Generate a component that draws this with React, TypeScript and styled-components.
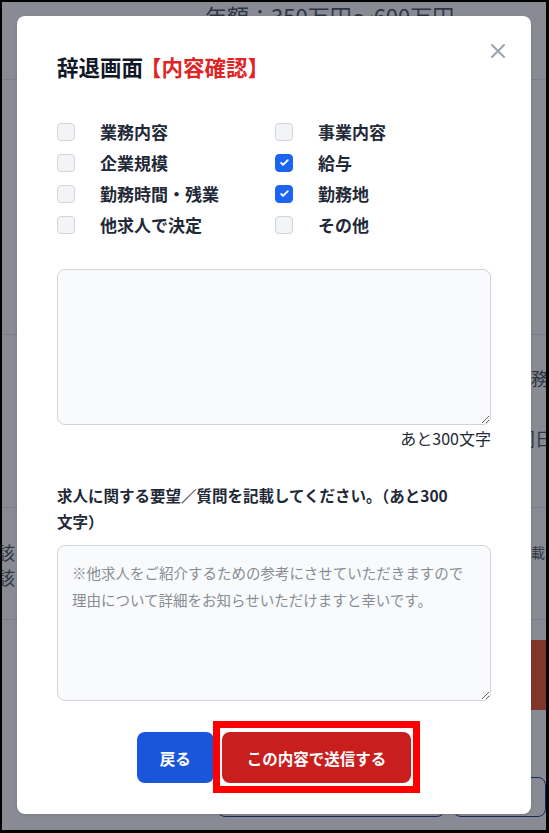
import React from 'react';
import styled, { createGlobalStyle } from 'styled-components';

const GlobalStyle = createGlobalStyle`
  html, body {
    margin: 0;
    padding: 0;
  }
  body {
    font-family: "Noto Sans CJK JP", "Noto Sans", sans-serif;
  }
  * {
    box-sizing: border-box;
  }
`;

const Frame = styled.div`
  position: relative;
  width: 549px;
  height: 833px;
  border-style: solid;
  border-color: #000;
  border-width: 2px 3px 3px 2px;
  overflow: hidden;
  background: #fff;
`;

/* page behind the dialog */
const Page = styled.div`
  display: flex;
  flex-direction: column;
  color: #4b5563;
  font-size: 18px;
  white-space: nowrap;
`;

const Band = styled.div<{ $h: number; $line?: boolean }>`
  height: ${(p) => p.$h}px;
  border-bottom: ${(p) => (p.$line ? '1px solid #e5e7eb' : 'none')};
  overflow: hidden;
`;

const Salary = styled.div`
  margin-top: -2px;
  padding-left: 203px;
  font-size: 22px;
  line-height: 30px;
`;

const RightLines = styled.div`
  display: flex;
  flex-direction: column;
  gap: 34px;
  padding: 30px 0 0 511px;
  line-height: 26px;
`;

const Shifted = styled.div<{ $dx: number }>`
  margin-left: ${(p) => p.$dx}px;
`;

const SplitRow = styled.div`
  display: grid;
  grid-template-columns: 513px 1fr;
  padding-top: 32px;
  line-height: 25px;
`;

const LeftText = styled.div`
  margin-left: -5px;
`;

const SmallRight = styled.div`
  font-size: 14px;
  margin-left: 2px;
`;

const Orange = styled.div`
  height: 70px;
  margin: 20px 0 0 290px;
  background: #f0542c;
`;

const BottomButtons = styled.div`
  display: flex;
  gap: 8px;
  margin-top: 67px;
  padding-left: 215px;
`;

const Outline = styled.div<{ $w: number }>`
  width: ${(p) => p.$w}px;
  height: 40px;
  border: 1.5px solid #1e3a8a;
  border-radius: 8px;
  padding: 8px 0 0 13px;
  color: #1e3a8a;
  font-weight: 700;
`;

const Backdrop = styled.div`
  position: absolute;
  inset: 0;
  background: rgba(17, 24, 39, 0.5);
`;

const Layer = styled.div`
  position: absolute;
  inset: 0;
  display: flex;
  justify-content: center;
  align-items: flex-start;
  padding-top: 14px;
`;

/* dialog */
const Modal = styled.div`
  width: 514px;
  height: 798px;
  background: #fff;
  border-radius: 8px;
  box-shadow: 0 1px 3px rgba(0, 0, 0, 0.12);
  padding: 36px 40px 31px;
  display: flex;
  flex-direction: column;
`;

const Header = styled.div`
  display: flex;
  justify-content: space-between;
  align-items: flex-start;
`;

const Title = styled.h3`
  margin: 0;
  font-size: 21.5px;
  line-height: 30px;
  font-weight: 700;
  color: #111827;
`;

const Accent = styled.span`
  color: #e02424;
  margin-left: -3px;
`;

const Close = styled.button`
  width: 16px;
  height: 16px;
  margin: -9px -15px 0 0;
  padding: 0;
  border: 0;
  background: none;
  color: #9ca3af;
  cursor: pointer;
  display: flex;
`;

const Checks = styled.div`
  display: grid;
  grid-template-columns: 218px 1fr;
  grid-auto-rows: 31px;
  margin-top: 34px;
`;

const CheckItem = styled.label`
  display: flex;
  align-items: center;
  gap: 25px;
  font-size: 17px;
  font-weight: 700;
  color: #1f2937;
`;

const Box = styled.span<{ $on: boolean }>`
  width: 18px;
  height: 18px;
  flex: none;
  border-radius: 4px;
  border: 1px solid ${(p) => (p.$on ? '#1c64f2' : '#d1d5db')};
  background: ${(p) => (p.$on ? '#1c64f2' : '#f3f4f6')};
  display: flex;
  align-items: center;
  justify-content: center;
`;

const Area = styled.textarea<{ $gap: number }>`
  display: block;
  width: 100%;
  height: 156px;
  margin-top: ${(p) => p.$gap}px;
  padding: 13px 14px;
  border: 1px solid #d1d5db;
  border-radius: 8px;
  background: #f9fafb;
  font-family: inherit;
  font-size: 14.5px;
  line-height: 27px;
  color: #111827;
  outline: none;
  &::placeholder {
    color: #878c95;
  }
`;

const Counter = styled.div`
  margin-top: 1px;
  text-align: right;
  font-size: 16px;
  line-height: 24px;
  color: #1f2937;
`;

const FieldLabel = styled.div`
  margin-top: 32px;
  font-size: 15.5px;
  line-height: 26px;
  font-weight: 700;
  color: #1f2937;
`;

const Actions = styled.div`
  display: flex;
  justify-content: center;
  gap: 8px;
  margin-top: 31px;
`;

const Btn = styled.button<{ $tone: 'blue' | 'red'; $px: number }>`
  height: 51px;
  padding: 0 ${(p) => p.$px}px;
  border: 0;
  border-radius: 8px;
  background: ${(p) => (p.$tone === 'blue' ? '#1a56db' : '#c81e1e')};
  color: #fff;
  font-family: inherit;
  font-size: 15.5px;
  font-weight: 700;
  cursor: pointer;
`;

const Highlight = styled.span`
  position: relative;
  display: inline-flex;
  &::after {
    content: '';
    position: absolute;
    top: -11px;
    bottom: -10px;
    left: -9px;
    right: -9px;
    border: 7px solid #ff0000;
    pointer-events: none;
  }
`;

const reasons = [
  { label: '業務内容', on: false },
  { label: '事業内容', on: false },
  { label: '企業規模', on: false },
  { label: '給与', on: true },
  { label: '勤務時間・残業', on: false },
  { label: '勤務地', on: true },
  { label: '他求人で決定', on: false },
  { label: 'その他', on: false },
];

const Check = () => (
  <svg width="15" height="15" viewBox="0 0 16 16" fill="#fff">
    <path d="M12.207 4.793a1 1 0 010 1.414l-5 5a1 1 0 01-1.414 0l-2-2a1 1 0 011.414-1.414L6.5 9.086l4.293-4.293a1 1 0 011.414 0z" />
  </svg>
);

export default function App() {
  return (
    <>
      <GlobalStyle />
      <Frame>
        <Page>
          <Band $h={78} $line>
            <Salary>年額：350万円～600万円</Salary>
          </Band>
          <Band $h={255} $line />
          <Band $h={173} $line>
            <RightLines>
              <div>業務内容</div>
              <Shifted $dx={4}>同日</Shifted>
            </RightLines>
          </Band>
          <Band $h={112} $line>
            <SplitRow>
              <LeftText>
                該当：あり
                <br />
                該当：なし
              </LeftText>
              <SmallRight>記載内容</SmallRight>
            </SplitRow>
          </Band>
          <Orange />
          <BottomButtons>
            <Outline $w={302} />
            <Outline $w={120}>採用</Outline>
          </BottomButtons>
        </Page>
        <Backdrop />
        <Layer>
          <Modal role="dialog">
            <Header>
              <Title>
                辞退画面<Accent>【内容確認】</Accent>
              </Title>
              <Close aria-label="閉じる">
                <svg width="16" height="16" viewBox="0 0 16 16" fill="none" stroke="currentColor" strokeWidth="2" strokeLinecap="round">
                  <path d="M2 2l12 12M14 2L2 14" />
                </svg>
              </Close>
            </Header>
            <Checks>
              {reasons.map((r) => (
                <CheckItem key={r.label}>
                  <Box $on={r.on}>{r.on && <Check />}</Box>
                  {r.label}
                </CheckItem>
              ))}
            </Checks>
            <Area $gap={29} />
            <Counter>あと300文字</Counter>
            <FieldLabel>
              求人に関する要望／質問を記載してください。（あと300
              <br />
              文字）
            </FieldLabel>
            <Area
              $gap={11}
              placeholder={'※他求人をご紹介するための参考にさせていただきますので\n理由について詳細をお知らせいただけますと幸いです。'}
            />
            <Actions>
              <Btn $tone="blue" $px={23}>戻る</Btn>
              <Highlight>
                <Btn $tone="red" $px={25}>この内容で送信する</Btn>
              </Highlight>
            </Actions>
          </Modal>
        </Layer>
      </Frame>
    </>
  );
}
